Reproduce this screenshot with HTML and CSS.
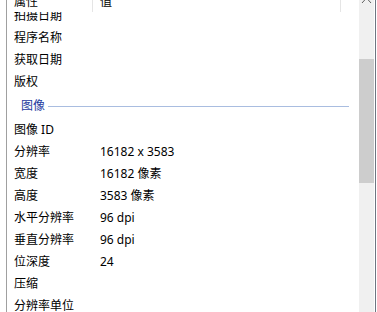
FILE: index.html
```html
<!DOCTYPE html>
<html lang="zh-CN">
<head>
<meta charset="utf-8">
<title>属性</title>
<link rel="stylesheet" href="styles.css">
</head>
<body>
<div class="window">
  <div class="view">
    <div class="list">
      <div class="header">
        <div class="hcell hname">属性</div>
        <div class="hcell hval">值</div>
      </div>
      <div class="row"><span class="name">拍摄日期</span><span class="val"></span></div>
      <div class="row"><span class="name">程序名称</span><span class="val"></span></div>
      <div class="row"><span class="name">获取日期</span><span class="val"></span></div>
      <div class="row"><span class="name">版权</span><span class="val"></span></div>
      <div class="group"><span class="gtitle">图像</span><span class="gline"></span></div>
      <div class="row"><span class="name">图像 ID</span><span class="val"></span></div>
      <div class="row"><span class="name">分辨率</span><span class="val">16182 x 3583</span></div>
      <div class="row"><span class="name">宽度</span><span class="val">16182 像素</span></div>
      <div class="row"><span class="name">高度</span><span class="val">3583 像素</span></div>
      <div class="row"><span class="name">水平分辨率</span><span class="val">96 dpi</span></div>
      <div class="row"><span class="name">垂直分辨率</span><span class="val">96 dpi</span></div>
      <div class="row"><span class="name">位深度</span><span class="val">24</span></div>
      <div class="row"><span class="name">压缩</span><span class="val"></span></div>
      <div class="row"><span class="name">分辨率单位</span><span class="val"></span></div>
    </div>
    <div class="scrollbar">
      <svg class="arrow" width="15" height="3" viewBox="0 0 15 3"><polyline points="3,3 7.5,-2 12,3" fill="none" stroke="#606060" stroke-width="1"/></svg>
      <div class="thumb"></div>
    </div>
    <div class="gap"></div>
  </div>
</div>
</body>
</html>
```

FILE: styles.css
```css
html, body {
  margin: 0;
  padding: 0;
  background: #ffffff;
}
body {
  width: 377px;
  height: 312px;
  overflow: hidden;
  font-family: "Noto Sans", "Noto Sans CJK SC", sans-serif;
  font-size: 12px;
  color: #000000;
}
.window {
  display: flex;
  height: 312px;
  padding-left: 6px;
  box-sizing: border-box;
}
.view {
  display: flex;
  flex: 1;
  border-left: 1px solid #a0a0a0;
  border-right: 1px solid #6e7682;
  margin-right: 1px;
  height: 312px;
  overflow: hidden;
}
.list {
  position: relative;
  width: 352px;
  flex: none;
  display: flex;
  flex-direction: column;
  padding-top: 5px;
  overflow: hidden;
}
.header {
  position: absolute;
  left: 0;
  top: -9px;
  height: 21px;
  width: 100%;
  display: flex;
  background: #ffffff;
  z-index: 2;
}
.hcell {
  line-height: 22px;
  height: 21px;
  padding-left: 7px;
  box-sizing: border-box;
  border-right: 1px solid #e5e5e5;
  overflow: hidden;
}
.hname { width: 86px; }
.hval { width: 248px; }
.row {
  display: flex;
  height: 22px;
  line-height: 22px;
  padding-left: 7px;
  white-space: nowrap;
}
.name {
  width: 86px;
  flex: none;
}
.val {
  flex: 1;
}
.group {
  display: flex;
  align-items: center;
  height: 26px;
  padding-left: 14px;
  padding-right: 10px;
  gap: 3px;
}
.gtitle {
  color: #1e3a9e;
  line-height: 26px;
}
.gline {
  flex: 1;
  height: 1px;
  background: #a9bde0;
}
.scrollbar {
  position: relative;
  width: 15px;
  flex: none;
  background: #f0f0f0;
}
.arrow {
  position: absolute;
  left: 0;
  top: 0;
}
.thumb {
  margin-top: 59px;
  height: 124px;
  background: #cdcdcd;
}
.gap {
  width: 1px;
  flex: none;
  background: #ffffff;
}
```
